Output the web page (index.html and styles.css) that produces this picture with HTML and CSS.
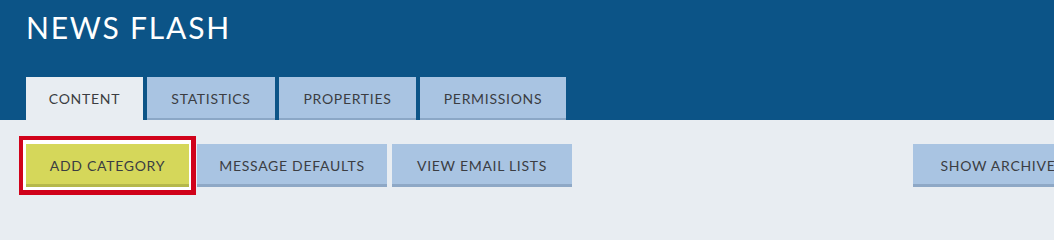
FILE: index.html
```html
<!DOCTYPE html>
<html lang="en">
<head>
<meta charset="utf-8">
<title>News Flash</title>
<link rel="stylesheet" href="styles.css">
</head>
<body>
<div class="page">
  <header class="header">
    <h1 class="title">NEWS FLASH</h1>
    <nav class="tabs">
      <a class="tab tab-active">CONTENT</a>
      <a class="tab">STATISTICS</a>
      <a class="tab">PROPERTIES</a>
      <a class="tab">PERMISSIONS</a>
    </nav>
  </header>
  <main class="content">
    <div class="toolbar">
      <div class="toolbar-left">
        <div class="highlight">
          <button class="btn btn-primary">ADD CATEGORY</button>
        </div>
        <button class="btn btn-defaults">MESSAGE DEFAULTS</button>
        <button class="btn btn-lists">VIEW EMAIL LISTS</button>
      </div>
      <div class="toolbar-right">
        <button class="btn btn-archive">SHOW ARCHIVE</button>
      </div>
    </div>
  </main>
</div>
</body>
</html>
```

FILE: styles.css
```css
html, body {
  margin: 0;
  padding: 0;
  background: #e8edf2;
  overflow: hidden;
}

.page {
  font-family: Lato, "Open Sans", sans-serif;
  width: 1054px;
  height: 209px;
  overflow: hidden;
}

.header {
  background: #0c5487;
  padding: 0 0 0 26px;
  height: 120px;
  display: flex;
  flex-direction: column;
}

.title {
  margin: 0;
  padding-top: 9px;
  height: 68px;
  box-sizing: border-box;
  color: #ffffff;
  font-weight: 400;
  font-size: 30px;
  line-height: 36px;
  letter-spacing: 1.8px;
}

.tabs {
  display: flex;
  gap: 4px;
  margin-top: 9px;
}

.tab {
  display: flex;
  align-items: center;
  justify-content: center;
  height: 43px;
  box-sizing: border-box;
  padding: 2px 0 0;
  background: #a9c4e2;
  border-bottom: 2px solid #8ba7c6;
  color: #3b3d42;
  font-size: 14px;
  letter-spacing: 0.7px;
}

.tab:nth-child(1) { width: 117px; }
.tab:nth-child(2) { width: 128px; }
.tab:nth-child(3) { width: 137px; }
.tab:nth-child(4) { width: 146px; }

.tab-active {
  background: #e8edf2;
  border-bottom-color: #e8edf2;
}

.content {
  padding-top: 16px;
}

.toolbar {
  display: flex;
  align-items: flex-start;
  width: 1083px;
  box-sizing: border-box;
  padding-left: 19px;
}

.toolbar-left {
  display: flex;
  align-items: flex-start;
  gap: 5px;
}

.toolbar-right {
  margin-left: auto;
  display: flex;
  padding-top: 8px;
}

.highlight {
  display: flex;
  border-style: solid;
  border-color: #d0021b;
  border-width: 4px 5px 5px 4px;
  padding: 4px 2px 3px 3px;
  background: #ffffff;
  margin-right: -4px;
}

.btn {
  display: flex;
  align-items: center;
  justify-content: center;
  height: 43px;
  box-sizing: border-box;
  border: 0;
  border-bottom: 3px solid #8ea8c6;
  background: #a9c4e2;
  color: #3b3d42;
  font-family: Lato, "Open Sans", sans-serif;
  font-size: 14px;
  letter-spacing: 0.7px;
  padding: 2px 0 0;
  margin: 0;
  white-space: nowrap;
}

.btn-primary {
  width: 163px;
  background: #d5d75a;
  border-bottom-color: #b5b84a;
}

.btn-defaults {
  width: 190px;
  margin-top: 8px;
}

.btn-lists {
  width: 180px;
  margin-top: 8px;
}

.btn-archive {
  width: 170px;
}
```
